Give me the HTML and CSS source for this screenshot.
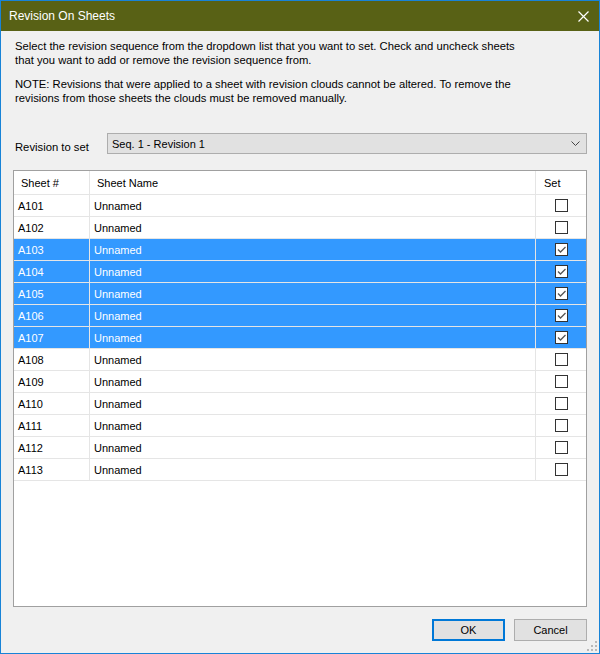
FILE: index.html
```html
<!DOCTYPE html>
<html>
<head>
<meta charset="utf-8">
<link rel="stylesheet" href="styles.css">
</head>
<body>
<div class="window">
  <div class="titlebar">
    <span class="title">Revision On Sheets</span>
    <svg class="close" width="11" height="11" viewBox="0 0 11 11"><path d="M0.5 0.5 L10.5 10.5 M10.5 0.5 L0.5 10.5" stroke="#fff" stroke-width="1.2" fill="none"/></svg>
  </div>
  <div class="content">
    <p class="para">Select the revision sequence from the dropdown list that you want to set. Check and uncheck sheets<br>that you want to add or remove the revision sequence from.</p>
    <p class="para note">NOTE: Revisions that were applied to a sheet with revision clouds cannot be altered. To remove the<br>revisions from those sheets the clouds must be removed manually.</p>
    <div class="pick">
      <span class="pick-label">Revision to set</span>
      <div class="combo">
        <span>Seq. 1 - Revision 1</span>
        <svg class="chev" width="9" height="5" viewBox="0 0 9 5"><path d="M0.5 0.5 L4.5 4.5 L8.5 0.5" stroke="#444" stroke-width="1" fill="none"/></svg>
      </div>
    </div>
    <div class="grid">
      <div class="row head">
        <div class="c1">Sheet #</div><div class="c2">Sheet Name</div><div class="c3">Set</div>
      </div>
      <div class="row"><div class="c1">A101</div><div class="c2">Unnamed</div><div class="c3"><span class="cb"></span></div></div>
      <div class="row"><div class="c1">A102</div><div class="c2">Unnamed</div><div class="c3"><span class="cb"></span></div></div>
      <div class="row sel"><div class="c1">A103</div><div class="c2">Unnamed</div><div class="c3"><span class="cb"><svg width="11" height="11" viewBox="0 0 11 11"><path d="M2 5.5 L4.5 8 L9.5 3" stroke="#555" stroke-width="1.3" fill="none"/></svg></span></div></div>
      <div class="row sel"><div class="c1">A104</div><div class="c2">Unnamed</div><div class="c3"><span class="cb"><svg width="11" height="11" viewBox="0 0 11 11"><path d="M2 5.5 L4.5 8 L9.5 3" stroke="#555" stroke-width="1.3" fill="none"/></svg></span></div></div>
      <div class="row sel"><div class="c1">A105</div><div class="c2">Unnamed</div><div class="c3"><span class="cb"><svg width="11" height="11" viewBox="0 0 11 11"><path d="M2 5.5 L4.5 8 L9.5 3" stroke="#555" stroke-width="1.3" fill="none"/></svg></span></div></div>
      <div class="row sel"><div class="c1">A106</div><div class="c2">Unnamed</div><div class="c3"><span class="cb"><svg width="11" height="11" viewBox="0 0 11 11"><path d="M2 5.5 L4.5 8 L9.5 3" stroke="#555" stroke-width="1.3" fill="none"/></svg></span></div></div>
      <div class="row sel"><div class="c1">A107</div><div class="c2">Unnamed</div><div class="c3"><span class="cb"><svg width="11" height="11" viewBox="0 0 11 11"><path d="M2 5.5 L4.5 8 L9.5 3" stroke="#555" stroke-width="1.3" fill="none"/></svg></span></div></div>
      <div class="row"><div class="c1">A108</div><div class="c2">Unnamed</div><div class="c3"><span class="cb"></span></div></div>
      <div class="row"><div class="c1">A109</div><div class="c2">Unnamed</div><div class="c3"><span class="cb"></span></div></div>
      <div class="row"><div class="c1">A110</div><div class="c2">Unnamed</div><div class="c3"><span class="cb"></span></div></div>
      <div class="row"><div class="c1">A111</div><div class="c2">Unnamed</div><div class="c3"><span class="cb"></span></div></div>
      <div class="row"><div class="c1">A112</div><div class="c2">Unnamed</div><div class="c3"><span class="cb"></span></div></div>
      <div class="row"><div class="c1">A113</div><div class="c2">Unnamed</div><div class="c3"><span class="cb"></span></div></div>
    </div>
    <div class="buttons">
      <div class="btn default">OK</div>
      <div class="btn">Cancel</div>
    </div>
  </div>
  <svg class="grip" width="10" height="10" viewBox="0 0 10 10" fill="#b8b8b8">
    <rect x="8" y="0" width="2" height="2"/>
    <rect x="4" y="4" width="2" height="2"/><rect x="8" y="4" width="2" height="2"/>
    <rect x="0" y="8" width="2" height="2"/><rect x="4" y="8" width="2" height="2"/><rect x="8" y="8" width="2" height="2"/>
  </svg>
</div>
</body>
</html>
```

FILE: styles.css
```css
html, body {
  margin: 0;
  padding: 0;
}
body {
  font-family: "Liberation Sans", Arial, sans-serif;
  font-size: 11px;
  color: #000;
}
.window {
  position: relative;
  width: 600px;
  height: 654px;
  box-sizing: border-box;
  border: 1px solid #1883d7;
  background: #f0f0f0;
  display: flex;
  flex-direction: column;
}
.titlebar {
  height: 30px;
  background: #586115;
  color: #fff;
  display: flex;
  align-items: center;
  justify-content: space-between;
  padding: 0 10px 0 8px;
  font-size: 12px;
}
.close {
  display: block;
}
.content {
  flex: 1;
  display: flex;
  flex-direction: column;
  padding: 8px 12px 0 12px;
}
.para {
  margin: 0 0 0 2px;
  line-height: 14px;
  font-size: 11.25px;
}
.note {
  margin-top: 10px;
}
.pick {
  display: flex;
  align-items: center;
  margin-top: 28px;
}
.pick-label {
  width: 92px;
  padding-left: 2px;
  padding-top: 7px;
  font-size: 11.25px;
}
.combo {
  flex: 1;
  height: 19px;
  border: 1px solid #adadad;
  background: #e1e1e1;
  display: flex;
  align-items: center;
  justify-content: space-between;
  padding: 0 6px 0 4px;
}
.grid {
  margin-top: 16px;
  height: 435px;
  background: #fff;
  border: 1px solid #a0a0a0;
}
.row {
  display: grid;
  grid-template-columns: 76px 446px 50px;
  height: 21px;
  border-bottom: 1px solid #e5e5e5;
}
.row.head {
  height: 23px;
}
.row > div {
  display: flex;
  align-items: center;
  border-right: 1px solid #e5e5e5;
}
.row > div.c3 {
  border-right: none;
  justify-content: center;
}
.c1 { padding-left: 4px; }
.c2 { padding-left: 4px; }
.head .c1 { padding-left: 7px; }
.head .c2 { padding-left: 7px; }
.head .c3 { justify-content: flex-start !important; padding-left: 8px; }
.row.sel {
  background: #3399ff;
  color: #fff;
}
.cb {
  width: 11px;
  height: 11px;
  border: 1px solid #333;
  background: #fff;
  display: block;
}
.cb svg { display: block; }
.buttons {
  display: flex;
  justify-content: flex-end;
  gap: 9px;
  margin-top: 12px;
}
.btn {
  width: 71px;
  height: 20px;
  border: 1px solid #adadad;
  background: #e1e1e1;
  display: flex;
  align-items: center;
  justify-content: center;
}
.btn.default {
  border: 2px solid #0078d7;
  width: 69px;
  height: 18px;
}
.grip {
  position: absolute;
  right: 2px;
  bottom: 2px;
}
```
